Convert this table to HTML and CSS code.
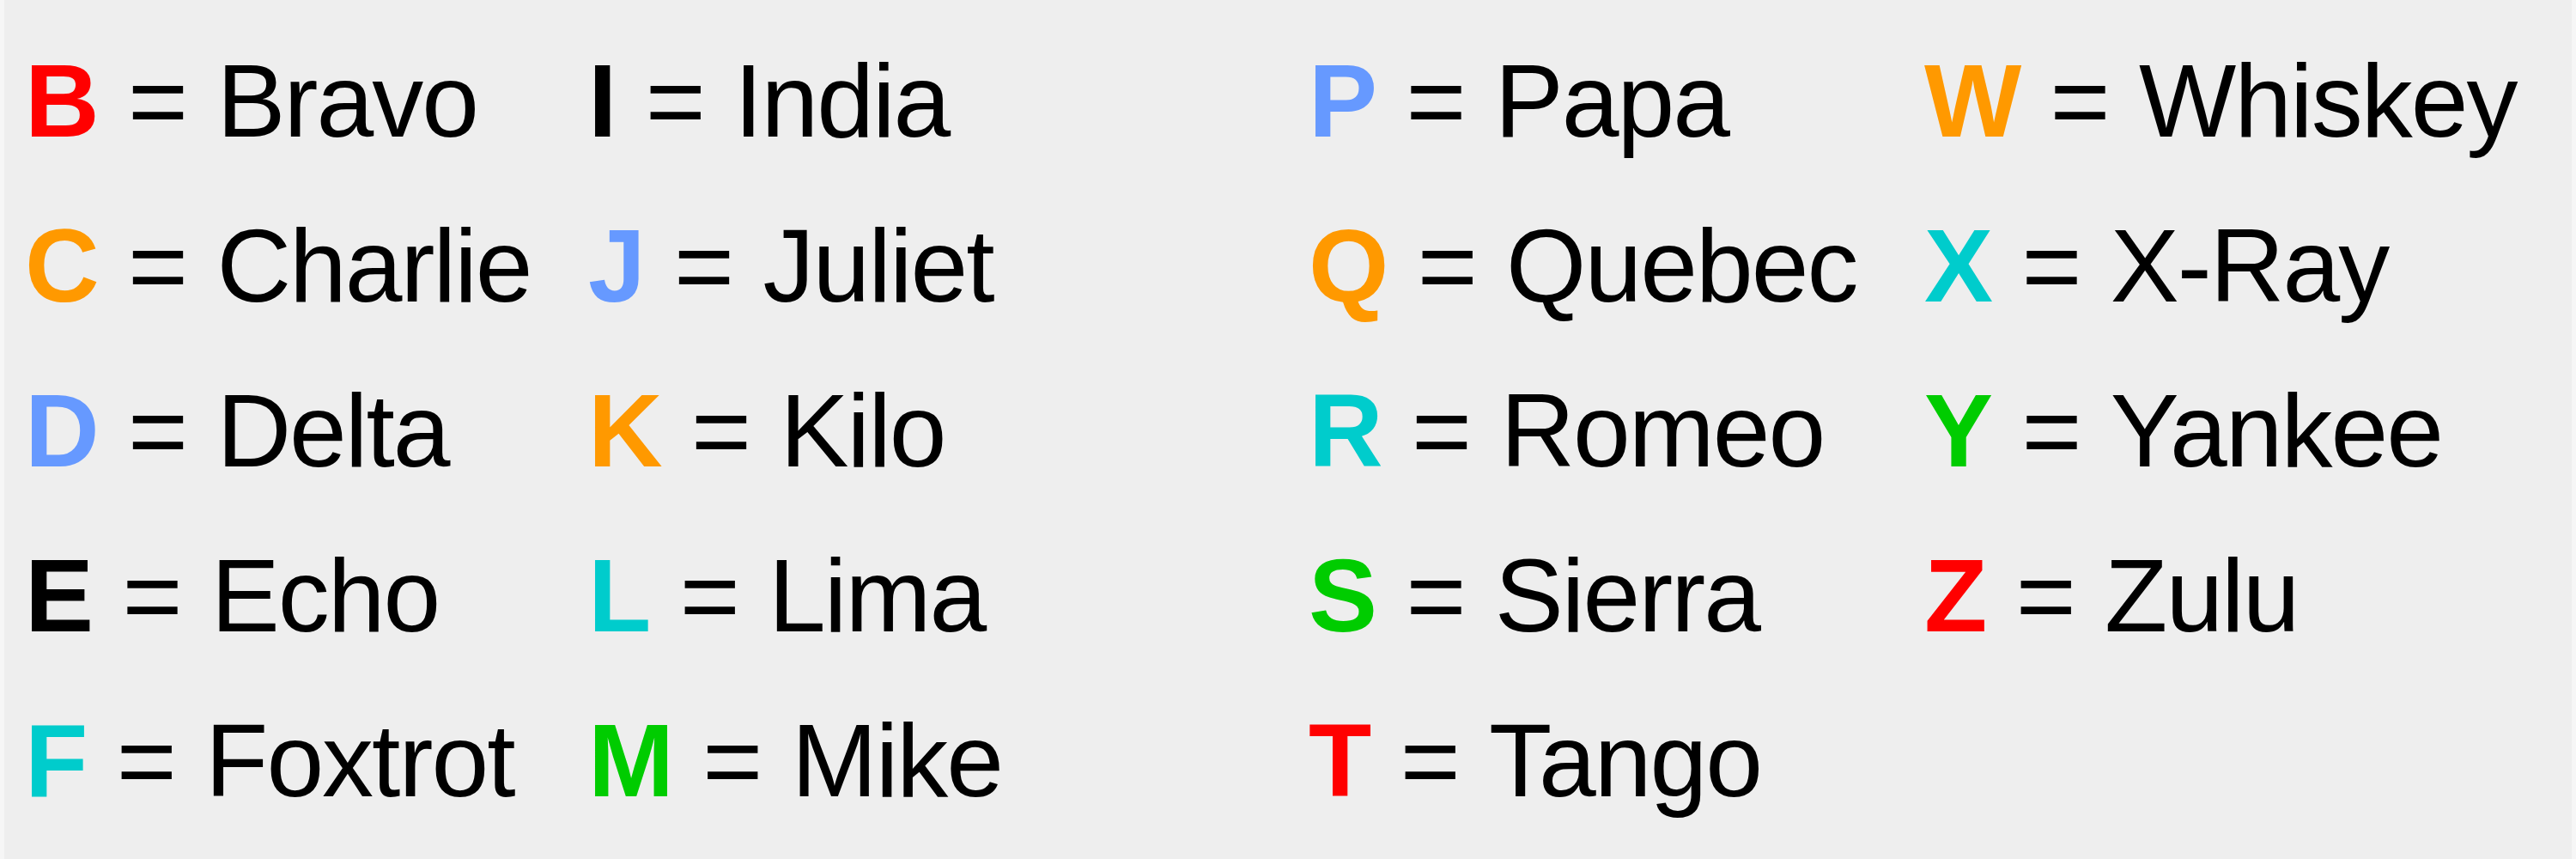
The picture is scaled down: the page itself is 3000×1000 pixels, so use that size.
FILE: index.html
```html
<!DOCTYPE html>
<html lang="en">
<head>
<meta charset="utf-8">
<title>Phonetic alphabet</title>
<link rel="stylesheet" href="styles.css">
</head>
<body>
<div class="panel">
  <div class="cell"><b class="red">B</b> = <span class="word">Bravo</span></div>
  <div class="cell"><b class="black">I</b> = <span class="word">India</span></div>
  <div class="cell"><b class="blue">P</b> = <span class="word">Papa</span></div>
  <div class="cell"><b class="orange">W</b> = <span class="word">Whiskey</span></div>

  <div class="cell"><b class="orange">C</b> = <span class="word">Charlie</span></div>
  <div class="cell"><b class="blue">J</b> = <span class="word">Juliet</span></div>
  <div class="cell"><b class="orange">Q</b> = <span class="word">Quebec</span></div>
  <div class="cell"><b class="cyan">X</b> = <span class="word">X-Ray</span></div>

  <div class="cell"><b class="blue">D</b> = <span class="word">Delta</span></div>
  <div class="cell"><b class="orange">K</b> = <span class="word">Kilo</span></div>
  <div class="cell"><b class="cyan">R</b> = <span class="word">Romeo</span></div>
  <div class="cell"><b class="green">Y</b> = <span class="word">Yankee</span></div>

  <div class="cell"><b class="black">E</b> = <span class="word">Echo</span></div>
  <div class="cell"><b class="cyan">L</b> = <span class="word">Lima</span></div>
  <div class="cell"><b class="green">S</b> = <span class="word">Sierra</span></div>
  <div class="cell"><b class="red">Z</b> = <span class="word">Zulu</span></div>

  <div class="cell"><b class="cyan">F</b> = <span class="word">Foxtrot</span></div>
  <div class="cell"><b class="green">M</b> = <span class="word">Mike</span></div>
  <div class="cell"><b class="red">T</b> = <span class="word">Tango</span></div>
  <div class="cell"></div>
</div>
</body>
</html>
```
FILE: styles.css
```css
html, body {
  margin: 0;
  padding: 0;
  background: #f6f6f6;
}

.panel {
  margin: 0 5px;
  height: 1000px;
  box-sizing: border-box;
  padding: 21px 0 0 24px;
  background: #eeeeee;
  display: grid;
  grid-template-columns: 656px 839px 717px auto;
  grid-auto-rows: 192px;
  font-family: "Liberation Sans", Arial, sans-serif;
  font-size: 120px;
  line-height: 192px;
  color: #000000;
}

.cell {
  white-space: nowrap;
}

.cell b {
  font-weight: bold;
}

.word {
  letter-spacing: -2px;
}

.red { color: #ff0000; }
.orange { color: #ff9900; }
.blue { color: #6699ff; }
.cyan { color: #00cccc; }
.green { color: #00cc00; }
.black { color: #000000; }
```
